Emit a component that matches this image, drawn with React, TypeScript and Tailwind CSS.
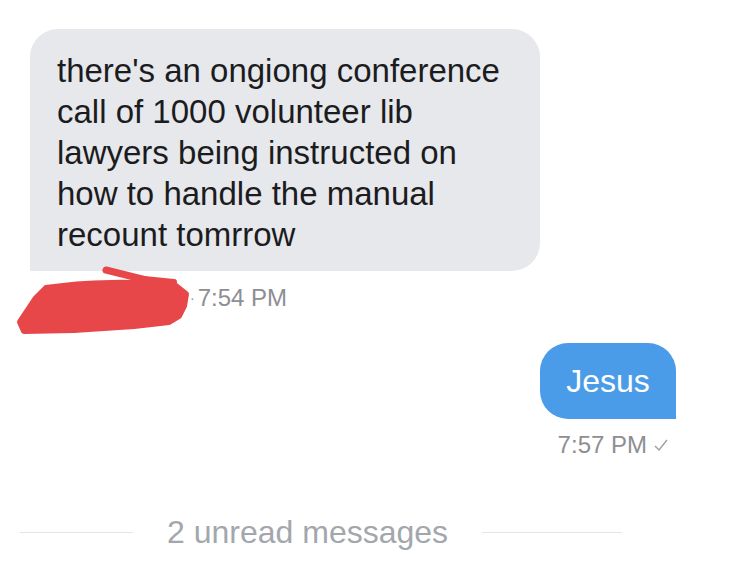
import React from "react";

const font = { fontFamily: '"Liberation Sans", Arial, sans-serif' };

const Scribble = () => (
	<svg width="190" height="72" viewBox="0 0 190 72" className="absolute left-[14px] top-[264px]">
		<g fill="#e8474a" stroke="#e8474a" strokeLinecap="round" strokeLinejoin="round">
			<path d="M92 6 L148 20" strokeWidth="7" fill="none" />
			<path d="M120 14 L160 18" strokeWidth="6" fill="none" />
			<path d="M32 24 C70 18 125 17 162 22 L172 30 L170 42 L165 52 L155 58 L120 62 L60 66 L10 67 L6 58 L14 46 L22 34 Z" strokeWidth="6" />
		</g>
	</svg>
);

export default function App() {
	return (
		<div className="relative w-[735px] h-[577px] bg-white overflow-hidden" style={font}>
			<div className="pt-[29px] pl-[30px]">
				<div className="w-[510px] h-[242px] bg-[#e6e8ec] rounded-[28px] rounded-bl-none pl-[27px] pt-[21px] text-[#1c1c1e] text-[33px] leading-[41px]">
					<div>there's an ongiong conference</div>
					<div>call of 1000 volunteer lib</div>
					<div>lawyers being instructed on</div>
					<div>how to handle the manual</div>
					<div>recount tomrrow</div>
				</div>
			</div>
			<div className="pl-[190px] mt-[12px] flex items-center gap-[3px] text-[#8e8e93] text-[24px] leading-[30px]">
				<span className="text-[14px]">·</span>
				<span>7:54 PM</span>
			</div>
			<Scribble />
			<div className="flex justify-end pr-[59px] mt-[30px]">
				<div className="w-[136px] h-[76px] bg-[#4b9ce8] rounded-[28px] rounded-br-none flex items-center justify-center text-white text-[32px]">
					Jesus
				</div>
			</div>
			<div className="flex justify-end pr-[66px] mt-[11px] items-center gap-[6px] text-[#8e8e93] text-[24px] leading-[30px]">
				<span>7:57 PM</span>
				<svg width="16" height="14" viewBox="0 0 16 14">
					<path d="M2 8 L6 12 L14 2" stroke="#a0a0a6" strokeWidth="1.5" fill="none" />
				</svg>
			</div>
			<div className="flex items-center mt-[52px] pl-[20px]">
				<div className="w-[113px] h-px bg-[#e4e5e8]" />
				<div className="ml-[34px] text-[32px] text-[#a3a7ad] leading-[40px]">2 unread messages</div>
				<div className="ml-[34px] w-[140px] h-px bg-[#e4e5e8]" />
			</div>
		</div>
	);
}
